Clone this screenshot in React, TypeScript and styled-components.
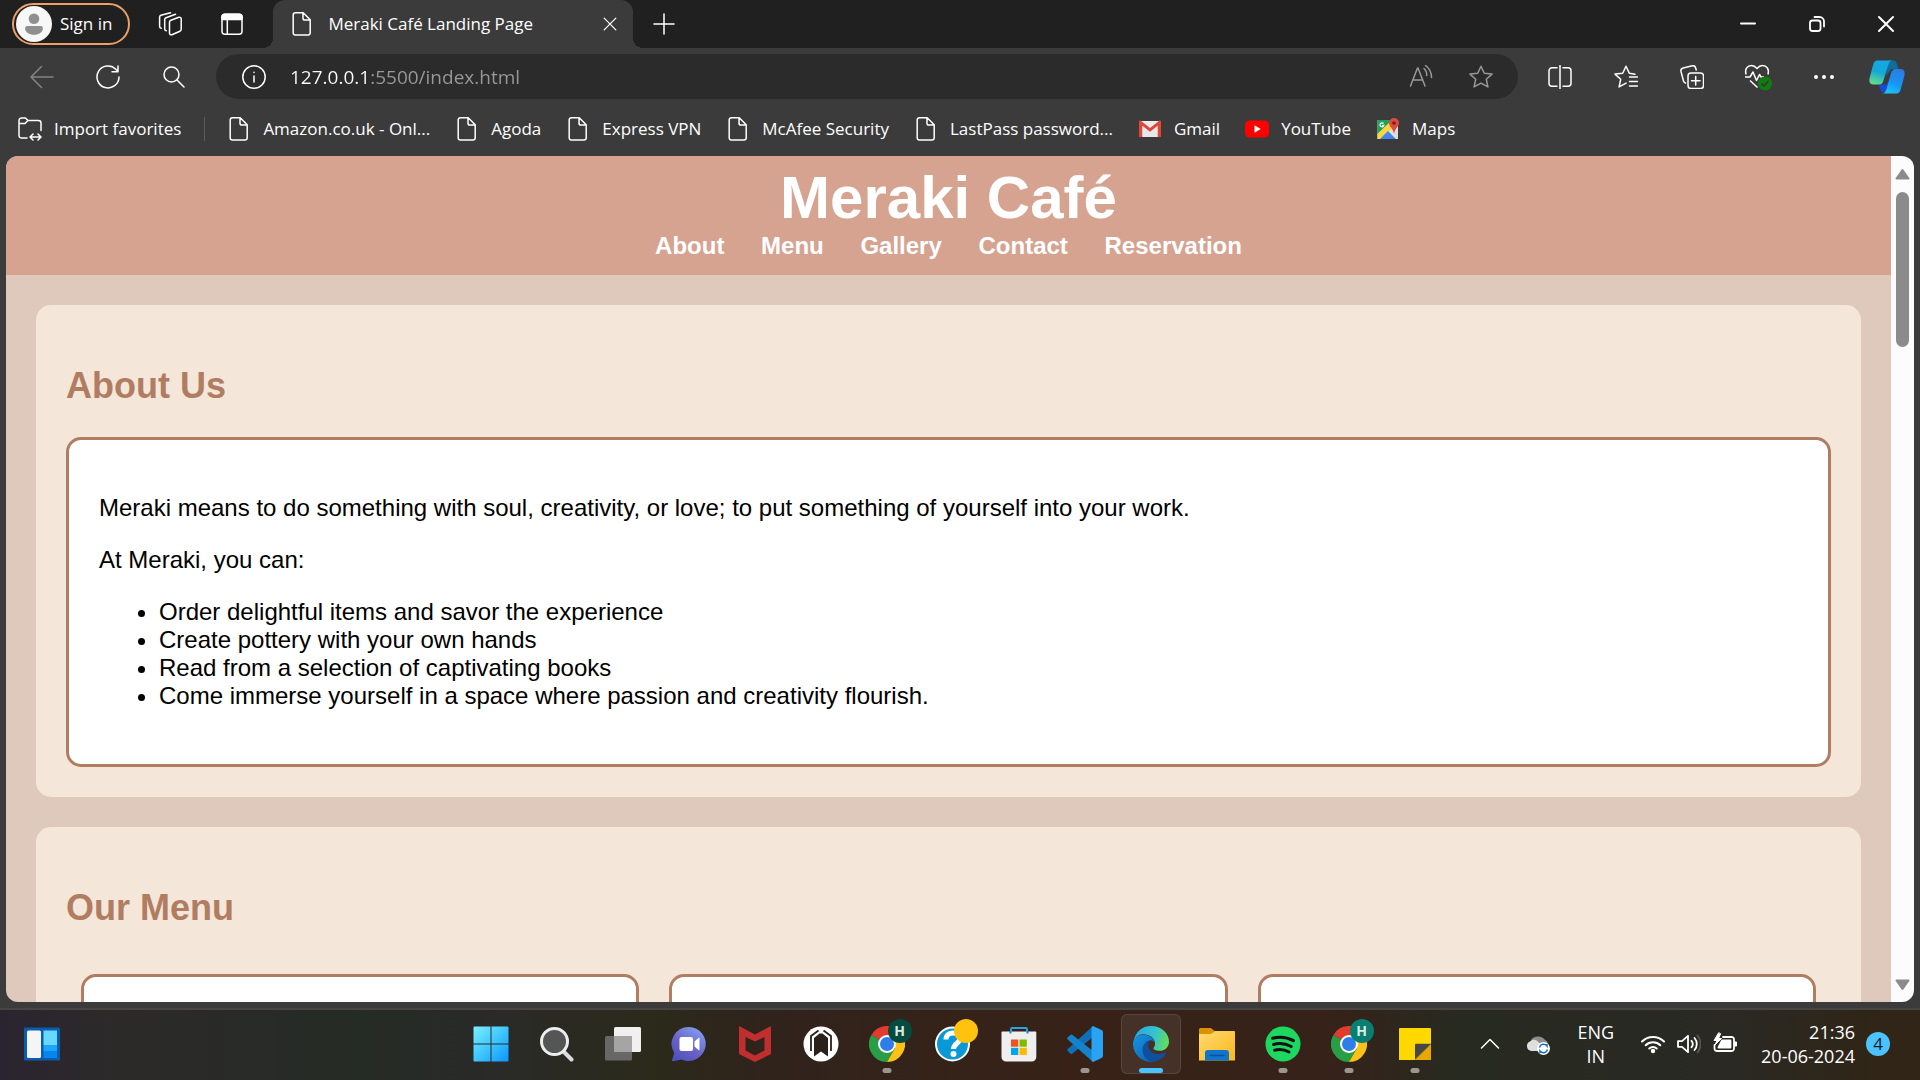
import React from "react";
import styled, { createGlobalStyle, css } from "styled-components";

const UI_FONT = `"Segoe UI", "Open Sans", "Noto Sans", sans-serif`;
const PAGE_FONT = `Arial, "Liberation Sans", sans-serif`;

const GlobalStyle = createGlobalStyle`
  *, *::before, *::after { box-sizing: border-box; }
  body { margin: 0; background: #3b3b3b; overflow: hidden; }
  button { border: 0; padding: 0; background: none; color: inherit; font: inherit; }
  a { color: inherit; text-decoration: none; }
`;

/* ---------- window chrome ---------- */

const Desktop = styled.div`
  display: flex;
  flex-direction: column;
  height: 100vh;
  color: #fff;
  font: 17px/24px ${UI_FONT};
`;

const TitleBar = styled.div`
  display: flex;
  flex: none;
  height: 48px;
  padding-left: 12px;
  background: #202020;
`;

const ProfileButton = styled.button`
  display: flex;
  align-items: center;
  align-self: center;
  gap: 8px;
  height: 42px;
  padding: 0 16px 0 2px;
  border: 2px solid #e9a06a;
  border-radius: 21px;
`;

const TitleIcon = styled.button`
  display: grid;
  place-items: center;
  width: 62px;
`;

const TabActions = styled.div`
  display: flex;
  width: 143px;
  padding-left: 9px;
`;

const Tab = styled.div`
  position: relative;
  display: flex;
  align-items: center;
  gap: 14px;
  width: 360px;
  padding: 0 13px 0 17px;
  border-radius: 12px 12px 0 0;
  background: #3b3b3b;

  &::before,
  &::after {
    content: "";
    position: absolute;
    bottom: 0;
    width: 10px;
    height: 10px;
  }
  &::before {
    right: 100%;
    background: radial-gradient(circle at 0 0, transparent 10px, #3b3b3b 10px);
  }
  &::after {
    left: 100%;
    background: radial-gradient(circle at 100% 0, transparent 10px, #3b3b3b 10px);
  }
`;

const TabTitle = styled.span`
  flex: 1;
  white-space: nowrap;
`;

const TabClose = styled.button`
  display: grid;
  place-items: center;
  width: 20px;
  height: 24px;
`;

const WindowButtons = styled.div`
  display: flex;
  margin-left: auto;
`;

const WindowButton = styled.button`
  display: grid;
  place-items: center;
  width: 69px;
`;

const Toolbar = styled.div`
  display: flex;
  align-items: center;
  flex: none;
  height: 57px;
  padding-left: 9px;
`;

const ToolButton = styled.button<{ $dim?: boolean }>`
  display: grid;
  place-items: center;
  flex: none;
  width: 66px;
  height: 45px;
  color: ${(p) => (p.$dim ? "#848484" : "#fff")};
`;

const AddressBar = styled.div`
  display: flex;
  align-items: center;
  flex: 1;
  height: 45px;
  margin: 0 9px;
  padding: 0 7px 0 26px;
  border-radius: 23px;
  background: #2b2b2b;
`;

const AddressInput = styled.input`
  flex: 1;
  height: 32px;
  margin-left: 24px;
  padding: 0;
  border: 0;
  outline: 0;
  font: 19px/32px ${UI_FONT};
  color: transparent;
  background: linear-gradient(90deg, #fff 79px, #999 79px);
  -webkit-background-clip: text;
  background-clip: text;
`;

const AddressButton = styled.button`
  display: grid;
  place-items: center;
  width: 60px;
  height: 40px;
  color: #999;
`;

const CopilotButton = styled(ToolButton)`
  width: 60px;
  margin-right: 3px;
`;

const FavoritesBar = styled.nav`
  display: flex;
  align-items: center;
  flex: none;
  gap: 25px;
  height: 51px;
  padding: 0 18px 4px;
`;

const Favorite = styled.a`
  display: flex;
  align-items: center;
  gap: 12px;
  white-space: nowrap;
`;

const FavoriteDivider = styled.span`
  width: 1px;
  height: 24px;
  margin: 0 -3px 0 -2px;
  background: #5c5c5c;
`;

/* ---------- café page ---------- */

const Viewport = styled.div`
  display: flex;
  flex: 1;
  min-height: 0;
  margin: 0 6px 6px;
  border-radius: 12px;
  overflow: hidden;
`;

const Page = styled.div`
  flex: 1;
  overflow: hidden;
  background: #dec9bc;
  color: #000;
  font: 24px/28px ${PAGE_FONT};
`;

const PageHeader = styled.header`
  padding: 8px 15px 15px;
  background: #d6a391;
  color: #fff;
  text-align: center;
`;

const SiteTitle = styled.h1`
  margin: 0;
  font-size: 60px;
  line-height: 68px;
`;

const SiteNav = styled.ul`
  margin: 0;
  padding: 0;
  font-weight: bold;
`;

const SiteNavItem = styled.li`
  display: inline;
  margin: 0 15px;
`;

const Section = styled.section`
  margin: 30px;
  padding: 30px;
  border-radius: 15px;
  background: #f4e6d9;
`;

const SectionTitle = styled.h2`
  margin: 30px 0;
  color: #b07d62;
  font-size: 36px;
  line-height: 42px;
`;

const panel = css`
  padding: 30px;
  border: 3px solid #b07d62;
  border-radius: 15px;
  background: #fff;
`;

const Panel = styled.div`
  ${panel}
`;

const Paragraph = styled.p`
  margin: 24px 0;
`;

const Offers = styled.ul`
  margin: 24px 0;
  padding-left: 60px;
`;

const MenuGrid = styled.div`
  display: grid;
  grid-template-columns: repeat(3, 1fr);
  gap: 30px;
  padding: 15px;
`;

const MenuCard = styled.article`
  ${panel}
  min-height: 300px;
`;

const ScrollTrack = styled.div`
  display: flex;
  flex-direction: column;
  align-items: center;
  flex: none;
  width: 23px;
  padding: 12px 0 11px;
  background: #fcfcfc;
`;

const ScrollThumb = styled.div`
  width: 13px;
  height: 155px;
  margin: 12px 0 auto;
  border-radius: 7px;
  background: #8b8b8b;
`;

/* ---------- taskbar ---------- */

const Taskbar = styled.footer`
  display: grid;
  grid-template-columns: 1fr auto 1fr;
  align-items: center;
  flex: none;
  height: 72px;
  padding: 0 15px 2px 0;
  border-top: 2px solid #484542;
  background: linear-gradient(
    90deg,
    #2a2430 0,
    #2c2a29 6%,
    #252b25 19%,
    #2a2a28 26%,
    #2b2a1b 34%,
    #30231c 40%,
    #382217 56%,
    #362219 69%,
    #272a20 76%,
    #2a2924 90%,
    #302516 98%
  );
`;

const WidgetsButton = styled.button`
  justify-self: start;
  display: grid;
  margin-left: 24px;
`;

const AppRow = styled.div`
  display: flex;
  gap: 6px;
`;

const AppButton = styled.button<{ $active?: boolean }>`
  position: relative;
  display: grid;
  place-items: center;
  width: 60px;
  height: 60px;
  border: 1px solid ${(p) => (p.$active ? "rgba(255,255,255,.1)" : "transparent")};
  border-radius: 6px;
  background: ${(p) => (p.$active ? "rgba(255,255,255,.07)" : "none")};
`;

const RunningMark = styled.span<{ $active?: boolean }>`
  position: absolute;
  bottom: 0;
  left: 50%;
  width: ${(p) => (p.$active ? 24 : 9)}px;
  height: 5px;
  border-radius: 3px;
  background: ${(p) => (p.$active ? "#4cc2ff" : "#9c9690")};
  transform: translateX(-50%);
`;

const AppBadge = styled.span<{ $color: string }>`
  position: absolute;
  top: 4px;
  right: 4px;
  width: 24px;
  height: 24px;
  border-radius: 50%;
  background: ${(p) => p.$color};
  color: #dcebe7;
  font: bold 14px/24px ${UI_FONT};
  text-align: center;
`;

const Tray = styled.div`
  display: flex;
  align-items: center;
  justify-self: end;
  padding-right: 15px;
  font-size: 18px;
`;

const TrayButton = styled.button`
  display: flex;
  align-items: center;
  gap: 12px;
  margin-right: 24px;
`;

const TrayText = styled(TrayButton)<{ $align: string }>`
  display: block;
  margin-right: 11px;
  text-align: ${(p) => p.$align};
`;

const LanguageText = styled(TrayText)`
  margin: 0 27px 0 3px;
`;

const NotificationCount = styled.button`
  width: 24px;
  height: 24px;
  border-radius: 50%;
  background: #4cc2ff;
  color: #10202a;
  font-size: 17px;
`;

/* ---------- drawings ---------- */

type LineProps = { size?: number; width?: number; children: React.ReactNode };

const Line = ({ size = 24, width = 1.5, children }: LineProps) => (
  <svg width={size} height={size} viewBox="0 0 24 24" fill="none" stroke="currentColor"
    strokeWidth={width} strokeLinecap="round" strokeLinejoin="round" aria-hidden="true">
    {children}
  </svg>
);

const Art = ({ size = 36, children }: { size?: number; children: React.ReactNode }) => (
  <svg width={size} height={size} viewBox="0 0 36 36" fill="none" aria-hidden="true">
    {children}
  </svg>
);

const FileIcon = () => (
  <Line width={1.5}>
    <path d="M5.500 .8h7.700l7 7v13a2.300 2.300 0 0 1-2.300 2.300H5.500a2.300 2.300 0 0 1-2.300-2.300V3.100A2.300 2.300 0 0 1 5.500 .8zM13 1v5.200a1.800 1.800 0 0 0 1.800 1.800H20" />
  </Line>
);

const AvatarIcon = () => (
  <Art>
    <circle cx="18" cy="18" r="18" fill="#f7f7f7" />
    <circle cx="18" cy="12.800" r="5.300" fill="#8f8f8f" />
    <path d="M11.300 20h13.400a2.200 2.200 0 0 1 2.200 2.200c0 4-4 6.500-8.900 6.500s-8.900-2.500-8.900-6.500a2.200 2.200 0 0 1 2.200-2.200z" fill="#8f8f8f" />
  </Art>
);

const WorkspacesIcon = () => (
  <Line>
    <path d="M12.900 8.300l8-3a1.700 1.700 0 0 1 2.300 1.600v10.400a2 2 0 0 1-1.300 1.900l-8 3.500a1.700 1.700 0 0 1-2.400-1.600V10.300a2 2 0 0 1 1.400-2z" />
    <path d="M8.300 18.700a1.800 1.800 0 0 1-1.600-1.800V7.700a2 2 0 0 1 1.300-1.900l9.500-3.500M3.300 16.200a1.800 1.800 0 0 1-1.700-1.800V5.200a2 2 0 0 1 1.300-1.900L12.500 .8" />
  </Line>
);

const VerticalTabsIcon = () => (
  <Line>
    <rect x="2" y="2.200" width="20" height="20" rx="3" />
    <path d="M2 7.500V5.200a3 3 0 0 1 3-3h14a3 3 0 0 1 3 3v2.300z" fill="currentColor" />
    <path d="M7.300 8v14" />
  </Line>
);

const CopilotIcon = () => (
  <Art>
    <defs>
      <linearGradient id="copA" x1=".6" y1="0" x2=".3" y2="1">
        <stop stopColor="#13a9e8" /><stop offset=".5" stopColor="#16a7d5" /><stop offset="1" stopColor="#62de8b" />
      </linearGradient>
      <linearGradient id="copB" x1=".8" y1="0" x2=".4" y2="1">
        <stop stopColor="#2f79e0" /><stop offset=".6" stopColor="#1596f6" /><stop offset="1" stopColor="#1bc5ef" />
      </linearGradient>
    </defs>
    <path d="M19 1.500h5c2.500 0 3.500 2 4.300 4.800L29.300 10h-7L17 17z" fill="#0b6f9c" />
    <path d="M9.500 25.500h8L21 19l-3 14.500h-3c-2.500 0-3.300-2-4-4z" fill="#1c48d6" />
    <path d="M8.500 1.500H24c-3 0-4 1.800-4.800 4.500l-4.700 15.500c-1 3-2 4-4.800 4H4.600c-3.500 0-4.900-2.500-4-6.500L4.200 5.500C5 3 6.300 1.500 8.500 1.500z" fill="url(#copA)" />
    <path d="M27.500 34.500H12.700c3 0 4-1.800 4.800-4.500L22 14.500c1-3 2-4.500 4.800-4.500h4.600c3.500 0 4.900 2.500 4 6.500l-3.600 13.500c-.9 3-2.100 4.500-4.300 4.500z" fill="url(#copB)" />
  </Art>
);

const ChromeIcon = () => (
  <Art>
    <path d="M18 18L2.400 9A18 18 0 0 1 33.600 9z" fill="#e33b2e" />
    <path d="M2.400 9A18 18 0 0 0 18 36l7.800-13.500L18 18z" fill="#2a9e47" />
    <path d="M33.600 9A18 18 0 0 1 18 36l7.800-13.500L18 9z" fill="#fbc116" />
    <path d="M18 9h15.600L18 9 9 18z" fill="#e33b2e" />
    <circle cx="18" cy="18" r="9" fill="#fff" />
    <circle cx="18" cy="18" r="7" fill="#2f7de9" />
  </Art>
);

const EdgeIcon = () => (
  <Art>
    <defs>
      <linearGradient id="edgeTop" x1="0" y1=".4" x2="1" y2=".6">
        <stop stopColor="#2ba5e0" /><stop offset=".55" stopColor="#33c3cf" /><stop offset="1" stopColor="#66e053" />
      </linearGradient>
      <linearGradient id="edgeBody" x1="0" y1="0" x2=".8" y2="1">
        <stop stopColor="#1595e0" /><stop offset="1" stopColor="#0c66ba" />
      </linearGradient>
    </defs>
    <path d="M.5 16C2 6 9 0 18 0c10.500 0 18 7.500 18 15.500 0 6-4.500 9.300-9.500 9.300-4 0-6-1.300-6-2.600 0-1 1.600-1.700 1.600-4.200C22.100 12 16 8.300 10.500 8.300 5.500 8.300 2 11.500 .5 16z" fill="url(#edgeTop)" />
    <path d="M10.500 8.800c6 0 10.500 4 11.300 8.200-1-2-3-3-5-2.500-3 .8-5.300 4-5.300 8.500 0 7 5 11 10.500 12.400A18 18 0 0 1 0 18c0-5.500 4.500-9.200 10.500-9.200z" fill="url(#edgeBody)" />
    <path d="M15 14.700c-3.500 1.800-5.500 5-5.500 9 0 7 5.500 12.300 11 12 5.500-.8 10-4 12.500-8.200.5-.9-.2-1.300-1-.9-2 1-4 1.500-6.500 1.500-6 0-10.300-4-10.300-8.600 0-2 .8-3.600 2-4.900z" fill="#114f9e" />
  </Art>
);

const VsCodeIcon = () => (
  <Art>
    <path d="M26 0v11L5.500 27.500a1.600 1.600 0 0 1-2.200 0L.8 25.200a1.600 1.600 0 0 1 0-2.300z" fill="#0f6fb8" />
    <path d="M26 36V25L5.500 9a1.600 1.600 0 0 0-2.200 0L.8 11.200a1.600 1.600 0 0 0 0 2.400z" fill="#1583cc" />
    <path d="M26 0l8.600 4.100a2.500 2.500 0 0 1 1.400 2.300v23.200a2.500 2.500 0 0 1-1.400 2.300L26 36a2.500 2.500 0 0 1-1.500-2V2A2.500 2.500 0 0 1 26 0z" fill="#2aa3f2" />
  </Art>
);

const drawings: Record<string, React.ReactNode> = {
  start: (
    <Art>
      <defs>
        <linearGradient id="win" x1="0" y1="0" x2="36" y2="36" gradientUnits="userSpaceOnUse">
          <stop stopColor="#7cf2ff" /><stop offset=".5" stopColor="#40c6ff" /><stop offset="1" stopColor="#0a95ff" />
        </linearGradient>
      </defs>
      <path d="M1.500 .5H17.500V17.500H.5V1.500a1 1 0 0 1 1-1zM18.500 .5h16a1 1 0 0 1 1 1v16h-17zM.5 18.500h17v17h-16a1 1 0 0 1-1-1zM18.500 18.500h17v16a1 1 0 0 1-1 1h-16z" fill="url(#win)" />
    </Art>
  ),
  search: (
    <Art>
      <path d="M24 25l8.500 8.500" stroke="#d9dcdf" strokeWidth="4" strokeLinecap="round" />
      <circle cx="15.500" cy="15.500" r="13" fill="#555" stroke="#eceef0" strokeWidth="3" />
    </Art>
  ),
  taskView: (
    <Art>
      <rect x="9" y="1" width="27" height="25" rx="1.500" fill="#f0f0f0" />
      <rect x="0" y="10" width="27" height="24.500" rx="1.500" fill="#6e6e6e" opacity=".9" />
      <path d="M9 10h18v16H9z" fill="#a5a5a5" />
    </Art>
  ),
  chat: (
    <Art>
      <defs>
        <linearGradient id="chat" x1=".2" y1="1" x2=".9" y2="0">
          <stop stopColor="#4e50bd" /><stop offset=".4" stopColor="#6a61c6" /><stop offset="1" stopColor="#83a5f6" />
        </linearGradient>
      </defs>
      <path d="M18 1a17 17 0 1 1-7.500 32.400L2.500 35.200c-1.200.2-1.700-.7-1.300-1.700l2-6.500A17 17 0 0 1 18 1z" fill="url(#chat)" />
      <rect x="8.500" y="11" width="13.500" height="14" rx="2" fill="#fff" />
      <path d="M23.500 15.500l4-3.500c.5-.4 1 0 1 .6v10.800c0 .6-.5 1-1 .6l-4-3.500z" fill="#fff" />
    </Art>
  ),
  mcafee: (
    <Art>
      <path d="M2 0l16 8.500L34 0v28L18 36 2 28zM8.500 11v13.500L18 29.500l9.500-5V11L18 15.500z" fill="#c02e2f" fillRule="evenodd" />
    </Art>
  ),
  armour: (
    <Art>
      <circle cx="18" cy="18" r="17.500" fill="#fff" />
      <path d="M15.500 4.500L8 10v15M20.500 4.500L28 10v15" stroke="#2b211b" strokeWidth="1.800" />
      <path d="M16.500 7.500h3l5.500 4.500v18.500L18 25.500l-7 5V12z" fill="#2b211b" />
    </Art>
  ),
  chrome: <ChromeIcon />,
  help: (
    <Art>
      <circle cx="17.500" cy="18" r="16.500" fill="#0b98d6" stroke="#fff" strokeWidth="2" />
      <path d="M11 13.500c0-4.500 3-6.500 7-6.500s6.800 2 6.800 5.500c0 5-6.300 5-6.300 10.500" stroke="#fff" strokeWidth="5" />
      <circle cx="18.500" cy="28" r="3" fill="#fff" />
    </Art>
  ),
  store: (
    <Art>
      <path d="M10 8V3.200A1.200 1.200 0 0 1 11.200 2h13.600A1.200 1.200 0 0 1 26 3.200V8" stroke="#1ba7e6" strokeWidth="2" />
      <path d="M1.500 5.500h33a.8.8 0 0 1 .8.8V31a4.500 4.500 0 0 1-4.500 4.500H5A4.500 4.500 0 0 1 .5 31V6.300a.8.8 0 0 1 1-.8z" fill="#efefef" />
      <path d="M9.500 5v2.500M26.500 5v2.500" stroke="#1b86c9" strokeWidth="2" />
      <path d="M10 13.500h7.300v7.200H10z" fill="#f25022" /><path d="M18.500 13.500h7.300v7.200h-7.300z" fill="#7fba00" />
      <path d="M10 21.800h7.300V29H10z" fill="#00a4ef" /><path d="M18.500 21.800h7.300V29h-7.300z" fill="#ffb900" />
    </Art>
  ),
  code: <VsCodeIcon />,
  edge: <EdgeIcon />,
  files: (
    <Art>
      <defs><linearGradient id="folder" x1="0" y1="0" x2="1" y2="1"><stop stopColor="#ffd970" /><stop offset="1" stopColor="#fbb91e" /></linearGradient></defs>
      <path d="M0 3.500A1.500 1.500 0 0 1 1.500 2h9.300c1.300 0 2 .6 3 1.500L16 5.500V10H0z" fill="#dc9300" />
      <path d="M0 8h11c1.500 0 2.200-.5 3.200-1.400.9-.9 1.700-1.600 3-1.600H35a1 1 0 0 1 1 1v28.500H0z" fill="url(#folder)" />
      <path d="M6 34.500V27a3 3 0 0 1 3-3h18a3 3 0 0 1 3 3v7.500z" fill="#0f76cc" />
      <path d="M11 29.500h14" stroke="#0a519a" strokeWidth="1.500" strokeLinecap="round" />
    </Art>
  ),
  spotify: (
    <Art>
      <circle cx="18" cy="18" r="17.500" fill="#1ed760" />
      <path d="M7.500 12.300c7-2 14.500-1.200 21 2.300M8.500 18.500c6-1.700 12-1 17.700 2M9.500 24.200c5-1.400 10-.8 14.500 1.800" stroke="#111" strokeWidth="3" strokeLinecap="round" />
    </Art>
  ),
  notes: (
    <Art>
      <path d="M2 3a1 1 0 0 1 1-1h30a1 1 0 0 1 1 1v15L18 34H2z" fill="#ffd800" />
      <path d="M34 18v16H18z" fill="#e9a800" />
      <path d="M18 18.500a.8.8 0 0 1 .8-.8H34L18 33.500z" fill="#474747" />
    </Art>
  ),
};

type AppEntry = { icon: string; label: string; running?: boolean; active?: boolean; badge?: string; badgeText?: string };

const apps: AppEntry[] = [
  { icon: "start", label: "Start" },
  { icon: "search", label: "Search" },
  { icon: "taskView", label: "Task View" },
  { icon: "chat", label: "Chat" },
  { icon: "mcafee", label: "McAfee" },
  { icon: "armour", label: "Armoury" },
  { icon: "chrome", label: "Chrome", running: true, badge: "#064b3e", badgeText: "H" },
  { icon: "help", label: "Help", badge: "#ffc20e" },
  { icon: "store", label: "Store" },
  { icon: "code", label: "Code", running: true },
  { icon: "edge", label: "Edge", running: true, active: true },
  { icon: "files", label: "Files" },
  { icon: "spotify", label: "Spotify", running: true },
  { icon: "chrome", label: "Chrome", running: true, badge: "#087f70", badgeText: "H" },
  { icon: "notes", label: "Sticky Notes", running: true },
];

const GmailIcon = () => (
  <svg width="24" height="24" viewBox="0 0 24 24" aria-hidden="true">
    <path d="M1.500 4h21v16h-21z" fill="#ececec" />
    <path d="M1 4.500C1 4 1.500 3.500 2.500 3.500L12 11l9.500-7.500c1 0 1.500.5 1.500 1V20h-3.500V9L12 15 4.500 9v11H1z" fill="#df473c" />
    <path d="M4.500 9l7.500 6 7.500-6v11h-15z" fill="#e8e8e8" />
  </svg>
);

const YouTubeIcon = () => (
  <svg width="24" height="24" viewBox="0 0 24 24" aria-hidden="true">
    <rect y="3.500" width="24" height="17" rx="4.500" fill="#f00" />
    <path d="M9.500 8.300v7.400l6.300-3.700z" fill="#fff" />
  </svg>
);

const MapsIcon = () => (
  <svg width="24" height="24" viewBox="0 0 24 24" aria-hidden="true">
    <path d="M1.500 3H21v19H1.500z" fill="#e4e4e4" />
    <path d="M1.500 3H17L1.500 17z" fill="#23a15a" />
    <path d="M1.500 22v-5L15 4l4 5L5.500 22z" fill="#fcd53f" />
    <path d="M4 22l8-8 8 8z" fill="#4285f4" />
    <path d="M15 11l6 11h1V9z" fill="#dcdcdc" />
    <path d="M7.500 6.500a2 2 0 1 0 .4 1.800H6" fill="none" stroke="#fff" strokeWidth="1.200" />
    <path d="M18 1a5 5 0 0 1 5 5c0 3.500-4 5-5 11-1-6-5-7.500-5-11a5 5 0 0 1 5-5z" fill="#e04a3e" />
    <circle cx="18" cy="6" r="1.800" fill="#7b1b17" />
  </svg>
);

const favorites: { label: string; icon: React.ReactNode }[] = [
  { label: "Amazon.co.uk - Onl...", icon: <FileIcon /> },
  { label: "Agoda", icon: <FileIcon /> },
  { label: "Express VPN", icon: <FileIcon /> },
  { label: "McAfee Security", icon: <FileIcon /> },
  { label: "LastPass password...", icon: <FileIcon /> },
  { label: "Gmail", icon: <GmailIcon /> },
  { label: "YouTube", icon: <YouTubeIcon /> },
  { label: "Maps", icon: <MapsIcon /> },
];

const navLinks = ["About", "Menu", "Gallery", "Contact", "Reservation"];

const offers = [
  "Order delightful items and savor the experience",
  "Create pottery with your own hands",
  "Read from a selection of captivating books",
  "Come immerse yourself in a space where passion and creativity flourish.",
];

const BrowserTop = () => (
  <>
    <TitleBar>
      <ProfileButton><AvatarIcon />Sign in</ProfileButton>
      <TabActions>
        <TitleIcon aria-label="Workspaces"><WorkspacesIcon /></TitleIcon>
        <TitleIcon aria-label="Vertical tabs"><VerticalTabsIcon /></TitleIcon>
      </TabActions>
      <Tab>
        <FileIcon />
        <TabTitle>Meraki Café Landing Page</TabTitle>
        <TabClose aria-label="Close tab"><Line size={20}><path d="M5 5l14 14M19 5L5 19" /></Line></TabClose>
      </Tab>
      <TitleIcon aria-label="New tab"><Line><path d="M12 2v20M2 12h20" /></Line></TitleIcon>
      <WindowButtons>
        <WindowButton aria-label="Minimize"><Line width={2}><path d="M5 11.500h14" /></Line></WindowButton>
        <WindowButton aria-label="Restore">
          <Line width={1.800}><rect x="5" y="8.500" width="10.500" height="10.500" rx="2.500" /><path d="M9.500 5h5A4.500 4.500 0 0 1 19 9.500v5" /></Line>
        </WindowButton>
        <WindowButton aria-label="Close"><Line width={2}><path d="M5 5l14 14M19 5L5 19" /></Line></WindowButton>
      </WindowButtons>
    </TitleBar>
    <Toolbar>
      <ToolButton $dim aria-label="Back"><Line><path d="M23 12H1M11.500 1.500L1 12l10.500 10.500" /></Line></ToolButton>
      <ToolButton aria-label="Refresh"><Line><path d="M23 12a11 11 0 1 1-3.200-7.800l2.200 2.200M22 1v5.800h-6" /></Line></ToolButton>
      <ToolButton aria-label="Search"><Line><circle cx="9.500" cy="9.500" r="7.500" /><path d="M15 15l7 7" /></Line></ToolButton>
      <AddressBar>
        <Line><circle cx="12" cy="12" r="11.200" /><path d="M12 11v6M12 7.200v.3" /></Line>
        <AddressInput aria-label="Address" defaultValue="127.0.0.1:5500/index.html" />
        <AddressButton aria-label="Read aloud">
          <Line><path d="M1.500 21L8.500 3h.5l7 18M4 15h9.500M15 3.500c1.800 1.500 2.800 3.800 2.800 7M16.500 .5c3.500 2.500 6 6.500 6 12" /></Line>
        </AddressButton>
        <AddressButton aria-label="Add to favorites">
          <Line><path d="M12 1.200l3.300 7 7.700.9-5.700 5.200 1.600 7.600L12 18.200l-6.900 3.700 1.600-7.600L1 9.100l7.700-.9z" /></Line>
        </AddressButton>
      </AddressBar>
      <ToolButton aria-label="Split screen">
        <Line><path d="M9 2.800H4A3 3 0 0 0 1 5.800v12.400a3 3 0 0 0 3 3h5M15 2.800h5a3 3 0 0 1 3 3v12.400a3 3 0 0 1-3 3h-5M12 0v24" /></Line>
      </ToolButton>
      <ToolButton aria-label="Favorites">
        <Line><path d="M21 9.200l-5.700-1L12 1.200l-3.300 7L1 9.100l5.700 5.200-1.600 7.600 7-3.700M15.500 12H23.500M15.500 16.500H23.500M15.500 21H23.500" /></Line>
      </ToolButton>
      <ToolButton aria-label="Collections">
        <Line>
          <rect x="8" y="8" width="15.500" height="15.500" rx="3" /><path d="M15.700 11.500v8.500M11.500 15.700H20" />
          <path d="M5.500 18a3 3 0 0 1-2-2L1 6.500A3 3 0 0 1 3.200 3l9-2.200A3 3 0 0 1 15.700 3l.5 2" />
        </Line>
      </ToolButton>
      <ToolButton aria-label="Browser essentials">
        <svg width="28" height="28" viewBox="0 0 28 28" fill="none" stroke="currentColor" strokeWidth="1.500" strokeLinejoin="round" aria-hidden="true">
          <path d="M2 11.500C.5 6 3.500 2.500 7.500 2.500c2.500 0 4.200 1.500 5.500 3 1.300-1.500 3-3 5.500-3 4 0 7 3.500 5.500 9M1 14h5l3-5 3.500 8.500 3-6 1.500 2.500h3M6 17.500l7.500 7" />
          <circle cx="21" cy="20.500" r="7" fill="#107c10" stroke="none" />
          <path d="M17.500 20.500l2.500 2.500 4.500-5" stroke="#333" />
        </svg>
      </ToolButton>
      <ToolButton aria-label="More">
        <svg width="24" height="24" viewBox="0 0 24 24" fill="currentColor" aria-hidden="true"><circle cx="4" cy="12" r="2" /><circle cx="12" cy="12" r="2" /><circle cx="20" cy="12" r="2" /></svg>
      </ToolButton>
      <CopilotButton aria-label="Copilot"><CopilotIcon /></CopilotButton>
    </Toolbar>
    <FavoritesBar aria-label="Favorites">
      <Favorite href="#import">
        <Line>
          <path d="M9 21H3.500A2.500 2.500 0 0 1 1 18.500V3.500A2.500 2.500 0 0 1 3.500 1h4l2.500 2.500h10.500A2.500 2.500 0 0 1 23 6v7.500M1 6.500h6l3-3M12 20h11M15 17l-3 3 3 3M20 17l3 3-3 3" />
        </Line>
        Import favorites
      </Favorite>
      <FavoriteDivider />
      {favorites.map((f) => (
        <Favorite href="#favorite" key={f.label}>{f.icon}{f.label}</Favorite>
      ))}
    </FavoritesBar>
  </>
);

const CafePage = () => (
  <Page>
    <PageHeader>
      <SiteTitle>Meraki Café</SiteTitle>
      <nav>
        <SiteNav>
          {navLinks.map((name) => (
            <React.Fragment key={name}>
              <SiteNavItem><a href={"#" + name.toLowerCase()}>{name}</a></SiteNavItem>{" "}
            </React.Fragment>
          ))}
        </SiteNav>
      </nav>
    </PageHeader>
    <Section id="about">
      <SectionTitle>About Us</SectionTitle>
      <Panel>
        <Paragraph>Meraki means to do something with soul, creativity, or love; to put something of yourself into your work.</Paragraph>
        <Paragraph>At Meraki, you can:</Paragraph>
        <Offers>{offers.map((o) => <li key={o}>{o}</li>)}</Offers>
      </Panel>
    </Section>
    <Section id="menu">
      <SectionTitle>Our Menu</SectionTitle>
      <MenuGrid><MenuCard /><MenuCard /><MenuCard /></MenuGrid>
    </Section>
  </Page>
);

const Arrow = ({ down }: { down?: boolean }) => (
  <svg width="15" height="12" viewBox="0 0 15 12" aria-hidden="true">
    <path d={down ? "M1.500 1.500h12L7.500 10z" : "M1.500 10.500h12L7.500 2z"} fill="#8b8b8b" stroke="#8b8b8b" strokeWidth="2" strokeLinejoin="round" />
  </svg>
);

const SystemTaskbar = () => (
  <Taskbar>
    <WidgetsButton aria-label="Widgets">
      <Art>
        <rect x="0" y="1.500" width="36" height="33" rx="1" fill="#0b5cae" />
        <rect x="3" y="4.500" width="14" height="27.500" rx="1.500" fill="#f5f5f5" />
        <path d="M19.500 4.500H33V19H19.500z" fill="#67d8ff" /><path d="M19.500 19H33v6H19.500z" fill="#1ea5fb" /><path d="M19.500 25H33v7H19.500z" fill="#0787ee" />
      </Art>
    </WidgetsButton>
    <AppRow>
      {apps.map((a, i) => (
        <AppButton key={i} $active={a.active} aria-label={a.label}>
          {drawings[a.icon]}
          {a.badge && <AppBadge $color={a.badge}>{a.badgeText}</AppBadge>}
          {a.running && <RunningMark $active={a.active} />}
        </AppButton>
      ))}
    </AppRow>
    <Tray>
      <TrayButton aria-label="Hidden icons"><Line><path d="M3.500 16L12 7.500l8.500 8.500" /></Line></TrayButton>
      <TrayButton aria-label="OneDrive">
        <svg width="24" height="24" viewBox="0 0 24 24" aria-hidden="true">
          <path d="M5 8a8 7 0 0 1 14 0 5 5 0 0 1 2 8H7z" fill="#8d8d8d" />
          <path d="M5 19a5 5 0 0 1-1-9.500C7 6.500 11 8 12.500 10.500L20 14v5z" fill="#dedede" />
          <circle cx="17.500" cy="16.500" r="6.500" fill="#fff" />
          <path d="M13.500 15.500a4.200 4.200 0 0 1 7.500-1.500v-2M21.500 17.500A4.200 4.200 0 0 1 14 19v2" fill="none" stroke="#1a6fc4" strokeWidth="1.500" />
        </svg>
      </TrayButton>
      <LanguageText $align="center">ENG<br />IN</LanguageText>
      <TrayButton aria-label="Network, volume and battery">
        <Line width={2}><path d="M1 9.500a15.500 15.500 0 0 1 22 0M4.700 13.300a10.300 10.300 0 0 1 14.600 0M8.300 16.500a5.200 5.200 0 0 1 7.400 0" /><circle cx="12" cy="19" r="1.200" fill="currentColor" /></Line>
        <Line width={1.800}><path d="M1 9.200h4l6-5.400v16.400l-6-5.400H1zM14.500 8.800a5 5 0 0 1 0 6.400M17.500 6a9 9 0 0 1 0 12" /><path d="M20.500 3.500a13 13 0 0 1 0 17" stroke="#555" /></Line>
        <Line width={1.800}>
          <path d="M10 5h8.500A2.500 2.500 0 0 1 21 7.500v9a2.500 2.500 0 0 1-2.500 2.500H4a2.500 2.500 0 0 1-2.500-2.500V13M22 10.500h1.200v3H22z" />
          <path d="M9 8.500h8.500v7H5.500z" fill="currentColor" />
          <path d="M5.500 1L1 8.500h3L2 13l6.500-6.500h-3L7.500 2z" fill="currentColor" strokeWidth="1" />
        </Line>
      </TrayButton>
      <TrayText $align="right">21:36<br />20-06-2024</TrayText>
      <NotificationCount>4</NotificationCount>
    </Tray>
  </Taskbar>
);

export default function App() {
  return (
    <Desktop>
      <GlobalStyle />
      <BrowserTop />
      <Viewport>
        <CafePage />
        <ScrollTrack>
          <Arrow />
          <ScrollThumb />
          <Arrow down />
        </ScrollTrack>
      </Viewport>
      <SystemTaskbar />
    </Desktop>
  );
}
